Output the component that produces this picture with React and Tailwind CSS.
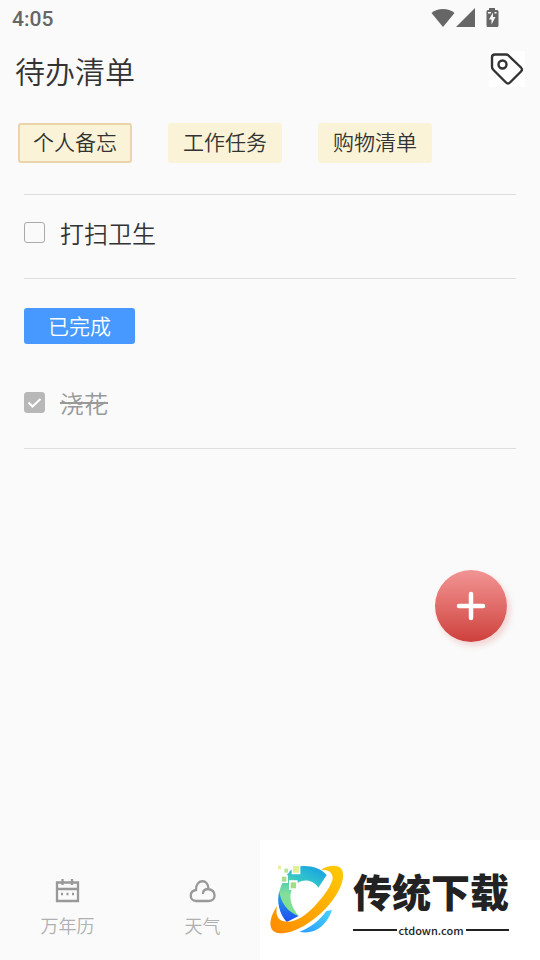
import React, { useState } from 'react';

const tabs = ['个人备忘', '工作任务', '购物清单'];

const StatusBar = () => (
  <div className="flex h-9 items-center justify-between pl-3 pr-10 text-[#666666]">
    <span className="pt-[2px] font-['Roboto',sans-serif] text-[21px] font-medium leading-8">4:05</span>
    <div className="flex items-center">
      <svg className="h-5 w-6" viewBox="0 0 24 20" fill="currentColor" aria-hidden="true">
        <path d="M0.5 5C6.5-.3 17.500-.3 23.500 5L12 19z" />
      </svg>
      <svg className="h-5 w-5" viewBox="0 0 20 20" fill="currentColor" aria-hidden="true">
        <path d="M20 0V19H1z" />
      </svg>
      <svg className="ml-[9px] h-5 w-4" viewBox="0 0 16 20" aria-hidden="true">
        <path d="M5 0h6v2h2a1.500 1.500 0 0 1 1.500 1.500v14A1.500 1.500 0 0 1 13 19H4a1.500 1.500 0 0 1-1.500-1.500v-14A1.500 1.500 0 0 1 4 2h1z" fill="currentColor" />
        <path d="M9 4.500 5 11.500h2.500v5L11.500 9H9z" fill="#fafafa" />
        <path d="M4 4h3v1.500H4zM10.500 4h2v1.500h-2z" fill="#fafafa" />
      </svg>
    </div>
  </div>
);

const TaskRow = ({ label, done, onToggle }) => (
  <label className="flex items-center gap-[15px] border-b border-[#dedede] pb-7 pt-5">
    <span className="relative flex h-[21px] w-[21px] shrink-0">
      <input
        type="checkbox"
        checked={done}
        onChange={onToggle}
        className="h-full w-full appearance-none rounded-[3px] border border-[#aaaaaa] bg-[#fafafa] checked:border-[#b8b8b8] checked:bg-[#b8b8b8]"
      />
      {done && (
        <svg className="pointer-events-none absolute inset-0" viewBox="0 0 21 21" fill="none" stroke="#fff" strokeWidth="2" aria-hidden="true">
          <path d="M4.500 10.500 8.500 14.500 16.500 7" />
        </svg>
      )}
    </span>
    <span className={`text-2xl font-[350] leading-[35px] ${done ? 'text-[#999999] line-through' : 'text-[#333333]'}`}>{label}</span>
  </label>
);

const BrandMark = () => (
  <svg className="h-[71px] w-[76px] shrink-0" viewBox="12 13 228 213" aria-hidden="true">
    <defs>
      <linearGradient id="ring" x1="1" y1="0" x2="0" y2="1">
        <stop offset="0" stopColor="#ffcb05" />
        <stop offset="1" stopColor="#ff8a00" />
      </linearGradient>
      <linearGradient id="arc" x1="0" y1="1" x2="1" y2="0">
        <stop offset="0" stopColor="#4fd2b0" />
        <stop offset="0.5" stopColor="#2bbfd0" />
        <stop offset="1" stopColor="#1596e6" />
      </linearGradient>
      <linearGradient id="leaf" x1="0" y1="0" x2="0" y2="1">
        <stop offset="0" stopColor="#3cc3bd" />
        <stop offset="0.5" stopColor="#85df9a" />
        <stop offset="1" stopColor="#7be08c" />
      </linearGradient>
      <linearGradient id="deep" x1="0" y1="0" x2="0" y2="1">
        <stop offset="0" stopColor="#25a5e8" />
        <stop offset="1" stopColor="#1f4ff0" />
      </linearGradient>
      <linearGradient id="tail" x1="0" y1="1" x2="1" y2="0">
        <stop offset="0" stopColor="#2d9bff" />
        <stop offset="1" stopColor="#45d4ff" />
      </linearGradient>
    </defs>
    <path d="M92 22C128 14 165 23 185 46L160 84C145 60 116 58 98 70L62 52C70 37 80 27 92 22z" fill="url(#arc)" />
    <path d="M43 96C48 74 58 56 72 44L98 70C68 90 70 132 101 168Q62 160 42 120z" fill="url(#leaf)" />
    <path d="M43 94C46 127 68 158 101 169L65 187C43 163 34 125 43 94z" fill="url(#deep)" />
    <path d="M103 216C140 203 165 180 184 154L201 151C185 200 145 227 103 216z" fill="url(#tail)" />
    <path d="M168 30C191 15 222 13 231 30C243 55 222 103 186 142C144 189 84 223 45 221C10 220 7 183 36 139C31 163 36 185 65 186C94 187 124 166 150 138C176 111 201 76 203 56C203 37 189 29 168 30z" fill="url(#ring)" />
    <path d="M47 47h22v23H47zM72 62h26v29H72zM80 15h26v29H80zM54 24h17v17H54z" fill="#fff" />
    <path d="M51 51h13v15H51z" fill="#a9dc8b" />
    <path d="M77 68h16v18H77z" fill="#a5dc83" />
    <path d="M84 19h18v20H84z" fill="#e3ef98" />
    <path d="M58 27h11v12H58z" fill="#b9e58b" />
    <path d="M39 18h9v11h-9z" fill="#e6efa5" />
  </svg>
);

const App = () => {
  const [activeTab, setActiveTab] = useState(tabs[0]);
  const [cleaned, setCleaned] = useState(false);
  const [watered, setWatered] = useState(true);

  return (
    <div className="relative flex min-h-screen flex-col bg-[#fafafa] font-['Noto_Sans_CJK_SC',sans-serif] text-[#333333]">
      <StatusBar />

      <header className="flex h-[72px] items-start justify-between px-[15px] pt-[15px]">
        <h1 className="text-[30px] font-[350] leading-[38px]">待办清单</h1>
        <button aria-label="标签" className="h-9 w-9 bg-white">
          <svg viewBox="0 0 36 36" fill="none" stroke="#333" strokeWidth="2.4" strokeLinejoin="round" aria-hidden="true">
            <path d="M6 3.500H17Q18.500 3.500 19.500 4.500L32 16.500Q34 18.500 32 20.500L21 31.500Q19 33.500 17 31.500L4.500 19Q3 17.500 3 16V6.500Q3 3.500 6 3.500z" />
            <circle cx="13.500" cy="13.500" r="4" />
          </svg>
        </button>
      </header>

      <nav className="flex gap-9 px-[18px] pt-[15px]">
        {tabs.map((tab) => (
          <button
            key={tab}
            onClick={() => setActiveTab(tab)}
            className={`h-10 w-[114px] rounded-[3px] border-2 bg-[#fbf3d8] pb-1 text-[21px] font-[350] leading-8 ${activeTab === tab ? 'border-[#ebd3ac]' : 'border-[#fbf3d8]'}`}
          >
            {tab}
          </button>
        ))}
      </nav>

      <main className="mx-6 mt-[31px] flex-grow border-t border-[#dedede]">
        <TaskRow label="打扫卫生" done={cleaned} onToggle={() => setCleaned(!cleaned)} />
        <h2 className="mb-[21px] mt-[29px] h-9 w-[111px] rounded-[3px] bg-[#4899ff] text-center text-[21px] font-[350] leading-[35px] text-white">已完成</h2>
        <TaskRow label="浇花" done={watered} onToggle={() => setWatered(!watered)} />
      </main>

      <button aria-label="添加" className="absolute bottom-[318px] right-[33px] flex h-[72px] w-[72px] items-center justify-center rounded-full bg-linear-to-b from-[#f29494] to-[#cd3f3d] shadow-[3px_4px_6px_rgba(205,63,61,0.2)]">
        <svg className="h-8 w-8" viewBox="0 0 32 32" stroke="#fff" strokeWidth="4.5" strokeLinecap="round" aria-hidden="true">
          <path d="M16 4v24M4 16h24" />
        </svg>
      </button>

      <footer className="relative flex h-[120px] text-lg font-[350] leading-6 text-[#b0b0b0]">
        <a href="#calendar" className="flex w-1/4 flex-col items-center gap-2 pt-[37px]">
          <svg className="h-7 w-7" viewBox="0 0 28 28" fill="none" stroke="#999" strokeWidth="2.3" aria-hidden="true">
            <path d="M3 5.500h21v18.500H3zM3 12h21M8.500 2v6M18 2v6M7 17h2M12.500 17h2M18 17h2" />
          </svg>
          <span>万年历</span>
        </a>
        <a href="#weather" className="flex w-1/4 flex-col items-center gap-2 pt-[37px]">
          <svg className="h-7 w-7" viewBox="0 0 28 28" fill="none" stroke="#999" strokeWidth="2.3" strokeLinecap="round" aria-hidden="true">
            <path d="M7 24C0 23.500 0 14 7 13C6.500 2 19.500 1 19.500 12C27.500 13.500 27.500 23.500 20 24zM19.500 12Q14.500 12 14 16" />
          </svg>
          <span>天气</span>
        </a>
        <div className="absolute right-0 top-0 flex h-full w-[280px] items-start gap-2 bg-white pl-[9px] pt-6 text-[#222222]">
          <BrandMark />
          <div className="flex flex-col">
            <span className="text-[39px] font-black leading-[52px]">传统下载</span>
            <div className="flex items-center gap-[2px] pt-1 text-[11px] font-medium leading-5">
              <span className="h-[2px] flex-grow bg-[#222222]" />
              ctdown.com
              <span className="h-[2px] flex-grow bg-[#222222]" />
            </div>
          </div>
        </div>
      </footer>
    </div>
  );
};

export default App;
